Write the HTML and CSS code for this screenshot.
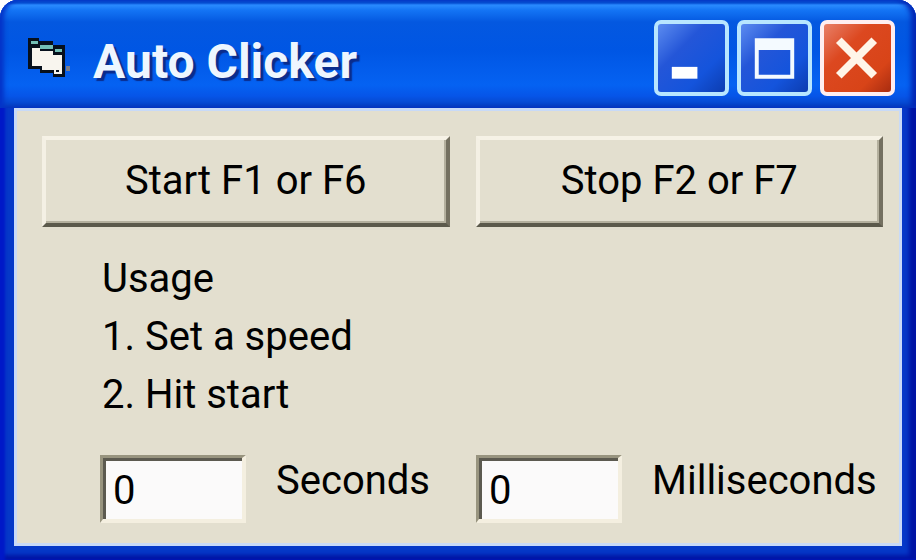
FILE: index.html
```
<!DOCTYPE html>
<html lang="en">
<head>
    <meta charset="UTF-8">
    <meta name="viewport" content="width=device-width, initial-scale=1.0">
    <title>Auto Clicker</title>
    <link rel="stylesheet" href="styles.css">
</head>
<body>

    <div class="window">
        <header class="titleBar">
            <svg class="appIcon" viewBox="0 0 42 42" aria-hidden="true">
                <path fill="#07101c" d="M0 1h11v3h14v4h12v32H25v-4H12v-4H0z"/>
                <path fill="#73bfb5" d="M3 4h7v3H3zM12 8h13v4H12zM27 12h7v3h-7z"/>
                <path fill="#f8f5ee" d="M4 11h8v3h13v4h9v19h-8v-4H14v-4H4z"/>
                <path fill="#07101c" d="M28 33h3v2h-3z"/>
                <path fill="#7a7e8c" d="M38 29h4v5h-4z"/>
            </svg>
            <h1 class="title">Auto Clicker</h1>
            <div class="winBtns">
                <button type="button" class="winBtn" aria-label="Minimize">
                    <svg viewBox="0 0 68 68"><path fill="#fff" d="M14 43h26v12H14z"/></svg>
                </button>
                <button type="button" class="winBtn" aria-label="Maximize">
                    <svg viewBox="0 0 68 68"><path fill="#f4faff" fill-rule="evenodd" d="M14 14h40v41H14zM18 26v25h32V26z"/></svg>
                </button>
                <button type="button" class="winBtn close" aria-label="Close">
                    <svg viewBox="0 0 68 68"><path fill="none" stroke="#fff5e8" stroke-width="8" d="M15 16l36 36M51 16L15 52"/></svg>
                </button>
            </div>
        </header>

        <main class="content">
            <div class="actions">
                <button type="button" class="btn">Start F1 or F6</button>
                <button type="button" class="btn">Stop F2 or F7</button>
            </div>
            <div class="usage">
                <p>Usage</p>
                <p>1. Set a speed</p>
                <p>2. Hit start</p>
            </div>
            <div class="fields">
                <div class="field">
                    <input type="text" id="seconds" value="0">
                    <label for="seconds">Seconds</label>
                </div>
                <div class="field">
                    <input type="text" id="milliseconds" value="0">
                    <label for="milliseconds">Milliseconds</label>
                </div>
            </div>
        </main>
    </div>

</body>
</html>
```
FILE: styles.css
```
* {
    box-sizing: border-box;
}
body {
    margin: 0;
    background: #fff;
    color: #000;
    font-family: Roboto, "Liberation Sans", sans-serif;
    font-size: 40px;
    line-height: 58px;
}
.window {
    min-height: 100vh;
    display: flex;
    flex-direction: column;
    padding: 0 14px 14px;
    border-radius: 18px 18px 0 0;
    background: #0538c8;
    box-shadow: inset 5px 0 3px #0018c8, inset -7px -5px 4px #0014a4;
}

/* title bar */
.titleBar {
    height: 108px;
    margin: 0 -14px;
    padding: 8px 21px 0 28px;
    display: flex;
    align-items: center;
    border-radius: 18px 18px 0 0;
    background: linear-gradient(#0756d8 0, #0756d8 3px, #2b8cff 5px, #1475f5 10px, #0458e0 22px, #0056e4 50px, #0562f2 85px, #0655e8 96px, #0640c0 108px);
    box-shadow: inset 4px 0 4px #0434c8, inset -5px 0 5px #0428b4;
}
.appIcon {
    width: 42px;
    height: 42px;
}
.title {
    margin: 0 auto 0 23px;
    padding-top: 8px;
    font-size: 48px;
    font-weight: bold;
    color: #eef6ff;
    text-shadow: 3px 3px 1px #0a2c8c;
}
.winBtns {
    display: flex;
    gap: 8px;
}
.winBtn {
    width: 75px;
    height: 76px;
    padding: 0;
    border: 4px solid #b8e6ff;
    border-radius: 7px;
    background: linear-gradient(135deg, #5c8cf0, #2456d8 35%, #1454dc 70%, #0c3cb0);
}
.winBtn.close {
    border-color: #ffeef0;
    background: linear-gradient(135deg, #e88068, #dc4820 35%, #d84418 75%, #a82c10);
}
.winBtn svg {
    display: block;
    width: 100%;
    height: 100%;
}

/* form */
.content {
    flex: 1;
    padding: 25px 16px 18px 25px;
    border: 3px solid #c8daf8;
    background: #e3dfcf;
}
.actions {
    display: grid;
    grid-template-columns: 1fr 1fr;
    gap: 26px;
}
.btn {
    height: 91px;
    padding: 0 0 2px;
    border: 4px solid;
    border-color: #f6f2e6 #747060 #5c5a4c #f4f0e4;
    box-shadow: inset -2px -2px 0 #b4b09e;
    background: #e3dfcf;
    color: #000;
    font: inherit;
}
.usage {
    padding: 23px 0 0 60px;
}
.usage p {
    margin: 0;
}
.fields {
    display: grid;
    grid-template-columns: 376px 1fr;
    padding: 31px 0 0 58px;
}
.field {
    display: flex;
    gap: 30px;
}
.field label {
    line-height: 52px;
}
.field input {
    width: 146px;
    height: 68px;
    padding: 4px 0 0 10px;
    border: 4px solid;
    border-width: 3px 4px 4px 3px;
    border-color: #98947f #f4efe0 #f4efe0 #98947f;
    outline: none;
    box-shadow: inset 3px 3px 0 #5c5a50;
    background: #fbfafa;
    color: #000;
    font: inherit;
}
```
